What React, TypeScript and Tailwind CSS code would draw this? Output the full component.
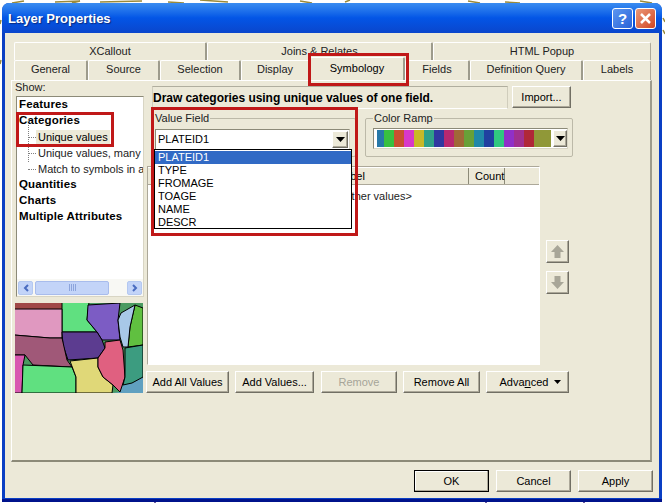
import React from "react";

const btn = "flex items-center justify-center border border-t-white border-l-white border-r-[#716f64] border-b-[#716f64] bg-[#ece9d8] shadow-[inset_-1px_-1px_0_#aca899]";
const bold = "h-[16px] flex items-center font-bold text-[11.5px] tracking-[0.15px]";

function Tab({ w, h, pb, label, last }: { w: string; h: string; pb: string; label: string; last?: boolean }) {
  return (
    <div className={`${w} ${h} ${pb} flex items-center justify-center rounded-t-[2px] border-t border-l border-t-white border-l-white bg-[#ece9d8] ${last ? "border-r border-r-[#aca899]" : "border-r-2 border-r-[#9d9b8c]"} text-[#222]`}>
      {label}
    </div>
  );
}

function Caret() {
  return (
    <svg width="9" height="5" viewBox="0 0 9 5"><path d="M0 0H9L4.5 5Z" fill="#000" /></svg>
  );
}

function MapPreview() {
  const P = (d: string, f: string) => <path d={d} fill={f} stroke="#000" strokeWidth="1" strokeLinejoin="round" />;
  return (
    <svg width="128" height="90" viewBox="0 0 128 90" className="block">
      <rect width="128" height="90" fill="#4a9a60" />
      <path d="M97 90L105 89L108 82L117 80L128 74V90Z" fill="#60a0c0" />
      <path d="M0 0H47V6H0Z" fill="#a04848" />
      {P("M47 -1H74L72 17L82 29H47Z", "#60e080")}
      {P("M-1 6H47V35L35 35L-1 32Z", "#e098c0")}
      {P("M120 2L128 5V42L113 44L115 24Z", "#60c040")}
      {P("M73 2L105 0L103 17L105 37H87L82 29L72 17Z", "#7c5cc4")}
      {P("M47 29H82L87 37L90 45L83 55L53 57L48 42Z", "#5c3c90")}
      {P("M-1 32L35 35H47L52 57L57 64L18 62L10 52H-1Z", "#a05878")}
      {P("M-1 52H10L8 62L7 90H-1Z", "#d858b0")}
      {P("M8 62L57 64L61 74V90H7Z", "#60e080")}
      {P("M55 58L83 55V64L88 74L98 82L97 90H61V74Z", "#e0d878")}
      {P("M90 39L105 37L108 47L110 74L105 89L98 82L88 74L83 64V55L90 45Z", "#e06080")}
      {P("M110 45L128 42V74L117 80L108 82L110 74Z", "#3c9c80")}
      {P("M106 10L120 2L115 24L113 44H108L105 34L103 17Z", "#a8c8e8")}
    </svg>
  );
}

const ramp = [
  "w-[7px] bg-[#2878a8]", "w-[10px] bg-[#38c040]", "w-[10px] bg-[#c85030]", "w-[10px] bg-[#d838c8]",
  "w-[10px] bg-[#c8b828]", "w-[10px] bg-[#30a088]", "w-[10px] bg-[#3038a0]", "w-[10px] bg-[#b82870]",
  "w-[10px] bg-[#a06838]", "w-[10px] bg-[#68a038]", "w-[10px] bg-[#2088a8]", "w-[10px] bg-[#2040a0]",
  "w-[10px] bg-[#30c880]", "w-[10px] bg-[#9030c8]", "w-[10px] bg-[#a03090]", "w-[10px] bg-[#b02838]",
  "w-[17px] bg-[#909838]",
];

const RED = "absolute border-[3px] border-[#c01818] pointer-events-none";

export default function App() {
  return (
    <div className="relative w-[665px] h-[503px] bg-white overflow-hidden font-['Liberation_Sans',Arial,sans-serif] text-[11px] leading-none text-black">
      {/* map scraps behind the dialog */}
      <svg className="absolute inset-0" width="665" height="503" viewBox="0 0 665 503">
        <g stroke="#9a8a3a" strokeWidth="1.5" fill="none">
          <path d="M12 3L24 1M55 2L80 1L72 3M100 2L142 1M168 2L184 3M200 0L228 2M300 1L312 3M345 2L350 0M468 1L480 3M505 2L520 3" />
          <path d="M640 1L652 3M663 18L665 22M663 30L665 34M1 20L0 24M1 60L0 64" />
        </g>
        <path d="M154 502H156M486 501V503M584 501V503" stroke="#6a5aa0" strokeWidth="2" />
      </svg>

      <div className="relative mt-[3px] ml-[2px] w-[660px] h-[499px] flex flex-col rounded-t-[7px] bg-[#0a3fc4] shadow-[inset_0_-3px_0_#00138c]">
        {/* title bar */}
        <div className="h-[30px] shrink-0 flex items-center justify-between pl-[6px] pr-[6px] rounded-t-[7px] bg-gradient-to-b from-[#3a8cf0] via-[#0355e6] to-[#0a46cc]">
          <span className="font-bold text-white text-[13px] [text-shadow:1px_1px_1px_#0a2a80]">Layer Properties</span>
          <div className="flex gap-[2px]">
            <div className="w-[21px] h-[21px] rounded-[3px] border border-white bg-gradient-to-br from-[#5c96f0] to-[#2a62d8] flex items-center justify-center text-white font-bold text-[15px]">?</div>
            <div className="w-[21px] h-[21px] rounded-[3px] border border-white bg-gradient-to-br from-[#ea9878] to-[#d0431f] flex items-center justify-center">
              <svg width="13" height="13" viewBox="0 0 13 13"><path d="M2 2L11 11M11 2L2 11" stroke="#fff" strokeWidth="2.5" /></svg>
            </div>
          </div>
        </div>

        {/* client */}
        <div className="relative mx-[3px] w-[654px] h-[465px] bg-[#ece9d8] pt-[9px] pl-[6px]">
          <div className="flex pl-[3px]">
            <Tab w="w-[193px]" h="h-[18px]" pb="pb-[1px]" label="XCallout" />
            <Tab w="w-[226px]" h="h-[18px]" pb="pb-[1px]" label="Joins & Relates" />
            <Tab w="w-[218px]" h="h-[18px]" pb="pb-[1px]" label="HTML Popup" last />
          </div>
          <div className="flex pl-[3px] h-[20px]">
            <Tab w="w-[74px]" h="h-[20px]" pb="pb-[3px]" label="General" />
            <Tab w="w-[72px]" h="h-[20px]" pb="pb-[3px]" label="Source" />
            <Tab w="w-[81px]" h="h-[20px]" pb="pb-[3px]" label="Selection" />
            <Tab w="w-[69px]" h="h-[20px]" pb="pb-[3px]" label="Display" />
            <div className="w-[95px] h-[23px] -mt-[3px] z-10 pb-[2px] flex items-center justify-center rounded-t-[2px] border-t border-l border-r-2 border-t-white border-l-white border-r-[#9d9b8c] bg-[#ece9d8]">Symbology</div>
            <Tab w="w-[65px]" h="h-[20px]" pb="pb-[3px]" label="Fields" />
            <Tab w="w-[113px]" h="h-[20px]" pb="pb-[3px]" label="Definition Query" />
            <Tab w="w-[68px]" h="h-[20px]" pb="pb-[3px]" label="Labels" last />
          </div>

          {/* panel */}
          <div className="w-[641px] h-[382px] flex border-t border-l border-t-white border-l-white border-r-2 border-b-2 border-r-[#9d9b8c] border-b-[#8c8a78] bg-[#ece9d8] pl-[3px]">
            {/* left column */}
            <div className="w-[130px] shrink-0 flex flex-col">
              <div className="h-[15px] pb-[3px] flex items-center text-[#222]">Show:</div>
              <div className="w-[128px] h-[201px] ml-[1px] flex flex-col border border-t-[#8c8a78] border-l-[#8c8a78] border-r-[#d8d5c4] border-b-[#d8d5c4] bg-white overflow-hidden">
                <div className="flex-1 pl-[2px] relative overflow-hidden">
                  <div className={bold}>Features</div>
                  <div className={bold}>Categories</div>
                  <div className="absolute left-[11px] top-[24px] h-[41px] border-l border-dotted border-[#808080]" />
                  {["Unique values", "Unique values, many fields", "Match to symbols in a style"].map((t, i) => (
                    <div key={t} className="h-[16px] flex items-center pl-[9px] whitespace-nowrap">
                      <span className="w-[8px] shrink-0 border-t border-dotted border-[#808080]" />
                      <span className={i === 0 ? "bg-[#ece9d8] h-[15px] flex items-center pl-[2px] pr-[2px]" : "pl-[2px] text-[#222]"}>{t}</span>
                    </div>
                  ))}
                  <div className={bold}>Quantities</div>
                  <div className={bold}>Charts</div>
                  <div className={bold}>Multiple Attributes</div>
                </div>
                <div className="h-[17px] shrink-0 flex items-center gap-[2px] px-[1px] bg-[#f8f8f4]">
                  <div className="w-[15px] h-[14px] rounded-[2px] bg-[#c3d4f8] border border-[#b4c8f0] flex items-center justify-center">
                    <svg width="6" height="8" viewBox="0 0 6 8"><path d="M5 1L2 4L5 7" fill="none" stroke="#4a6cc0" strokeWidth="2" /></svg>
                  </div>
                  <div className="w-[74px] h-[14px] rounded-[2px] bg-[#c3d4f8] border border-[#a8bcec] flex items-center justify-center gap-[1px]">
                    <span className="w-[1px] h-[7px] bg-[#8ca4dc]" /><span className="w-[1px] h-[7px] bg-[#8ca4dc]" /><span className="w-[1px] h-[7px] bg-[#8ca4dc]" /><span className="w-[1px] h-[7px] bg-[#8ca4dc]" />
                  </div>
                  <div className="flex-1" />
                  <div className="w-[15px] h-[14px] rounded-[2px] bg-[#c3d4f8] border border-[#b4c8f0] flex items-center justify-center">
                    <svg width="6" height="8" viewBox="0 0 6 8"><path d="M1 1L4 4L1 7" fill="none" stroke="#4a6cc0" strokeWidth="2" /></svg>
                  </div>
                </div>
              </div>
              <div className="mt-[6px]"><MapPreview /></div>
            </div>

            {/* right column */}
            <div className="flex flex-col pt-[5px] ml-[2px]">
              <div className="flex pl-[5px]">
                <div className="w-[356px] h-[23px] flex items-center border border-t-[#b0ae9e] border-l-[#d0cdbc] border-r-[#d0cdbc] border-b-white font-bold text-[12px] tracking-[-0.04px] whitespace-nowrap">Draw categories using unique values of one field.</div>
                <div className={`${btn} ml-[4px] w-[59px] h-[22px]`}>Import...</div>
              </div>
              <div className="flex mt-[9px] pl-[5px] h-[39px]">
                {/* Value Field group */}
                <div className="relative w-[204px] h-[39px] border border-[#bcb9a8] rounded-[2px]">
                  <span className="absolute -top-[6px] left-[1px] px-[1px] bg-[#ece9d8] text-[#222]">Value Field</span>
                  <div className="absolute left-[2px] top-[10px] w-[195px] h-[21px] flex items-center justify-between bg-white border border-t-[#8c8a78] border-l-[#8c8a78] border-r-[#d8d5c4] border-b-[#d8d5c4] pl-[2px]">
                    <span>PLATEID1</span>
                    <div className={`${btn} w-[16px] h-[17px] mr-[1px]`}><Caret /></div>
                  </div>
                  <div className="absolute z-20 left-[1px] top-[30px] w-[198px] h-[80px] bg-white border border-black pt-[1px]">
                    <div className="h-[13px] flex items-center pl-[3px] bg-[#316ac5] text-white">PLATEID1</div>
                    {["TYPE", "FROMAGE", "TOAGE", "NAME", "DESCR"].map((t) => (
                      <div key={t} className="h-[13px] flex items-center pl-[3px]">{t}</div>
                    ))}
                  </div>
                </div>
                {/* Color Ramp group */}
                <div className="relative ml-[9px] w-[208px] h-[39px] border border-[#bcb9a8] rounded-[2px]">
                  <span className="absolute -top-[6px] left-[7px] px-[1px] bg-[#ece9d8] text-[#222]">Color Ramp</span>
                  <div className="absolute left-[7px] top-[9px] w-[195px] h-[21px] flex items-center bg-white border border-t-[#8c8a78] border-l-[#8c8a78] border-r-[#d8d5c4] border-b-[#d8d5c4] pl-[3px]">
                    <div className="flex h-[17px] w-[176px]">
                      {ramp.map((c) => <div key={c} className={c} />)}
                    </div>
                    <div className={`${btn} w-[14px] h-[17px]`}><Caret /></div>
                  </div>
                </div>
              </div>

              <div className="flex mt-[9px]">
                <div className="w-[393px] h-[199px] flex flex-col border border-t-[#aca899] border-l-[#aca899] border-r-white border-b-white bg-white">
                  <div className="h-[18px] shrink-0 flex bg-[#ece9d8] border-t border-t-white border-b border-b-[#aca899]">
                    <div className="w-[70px] flex items-center pl-[6px] border-r border-r-[#8c8a78]">Symbol</div>
                    <div className="w-[111px] flex items-center pl-[6px] border-r border-r-[#8c8a78]">Value</div>
                    <div className="w-[140px] flex items-center pl-[9px] border-r border-r-[#8c8a78]">Label</div>
                    <div className="w-[36px] flex items-center pl-[6px] border-r border-r-[#8c8a78]">Count</div>
                    <div className="flex-1" />
                  </div>
                  <div className="h-[22px] flex items-center">
                    <div className="w-[70px] pl-[7px]"><span className="block w-[8px] h-[6px] bg-black" /></div>
                    <div className="w-[107px]" />
                    <div className="whitespace-nowrap text-[#222]">&lt;all other values&gt;</div>
                  </div>
                </div>
                <div className="ml-[6px] pt-[74px] flex flex-col gap-[8px]">
                  <div className={`${btn} w-[23px] h-[23px]`}>
                    <svg width="15" height="15" viewBox="0 0 15 15"><path d="M7.5 1L14 8H10.5V14H4.5V8H1Z" fill="#a8a698" /></svg>
                  </div>
                  <div className={`${btn} w-[23px] h-[23px]`}>
                    <svg width="15" height="15" viewBox="0 0 15 15"><path d="M4.5 1H10.5V7H14L7.5 14L1 7H4.5Z" fill="#a8a698" /></svg>
                  </div>
                </div>
              </div>

              <div className="flex mt-[6px] -ml-[1px] h-[22px] gap-[6px]">
                <div className={`${btn} w-[83px]`}>Add All Values</div>
                <div className={`${btn} w-[79px]`}>Add Values...</div>
                <div className={`${btn} w-[76px] ml-[1px] text-[#a6a598]`}>Remove</div>
                <div className={`${btn} w-[77px]`}>Remove All</div>
                <div className={`${btn} w-[83px] gap-[6px] pl-[6px]`}>
                  <span>Adva<span className="underline">n</span>ced</span>
                  <svg width="7" height="4" viewBox="0 0 7 4"><path d="M0 0H7L3.5 4Z" fill="#000" /></svg>
                </div>
              </div>
            </div>
          </div>

          {/* dialog buttons */}
          <div className="flex mt-[8px] ml-[403px] h-[22px] gap-[7px]">
            <div className="w-[75px] flex items-center justify-center border border-black bg-[#ece9d8] shadow-[inset_-1px_-1px_0_#aca899,inset_1px_1px_0_#fff]">OK</div>
            <div className={`${btn} w-[75px]`}>Cancel</div>
            <div className={`${btn} w-[75px]`}>Apply</div>
          </div>

          {/* red annotation boxes */}
          <div className={`${RED} left-[303px] top-[20px] w-[101px] h-[33px] z-30`} />
          <div className={`${RED} left-[11px] top-[79px] w-[98px] h-[35px] z-30`} />
          <div className={`${RED} left-[146px] top-[74px] w-[207px] h-[129px] z-30`} />
        </div>
      </div>
    </div>
  );
}
